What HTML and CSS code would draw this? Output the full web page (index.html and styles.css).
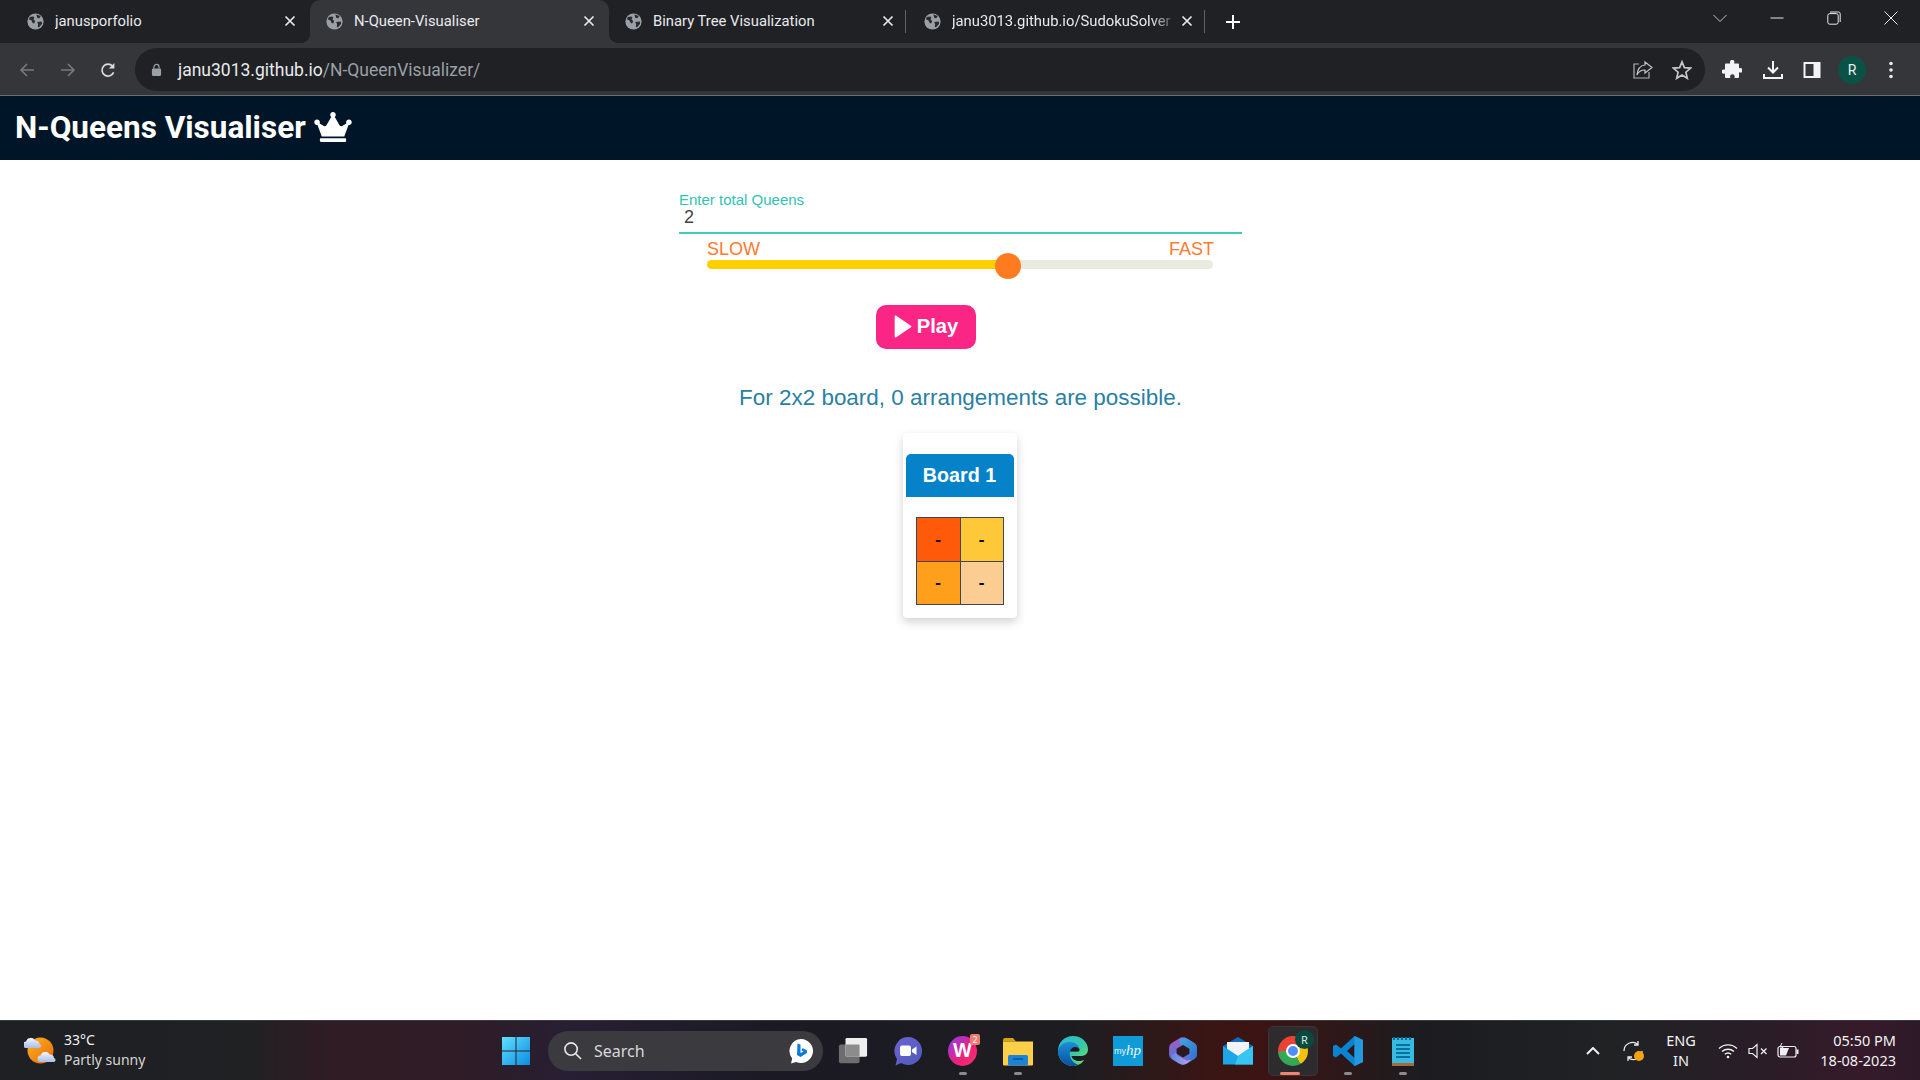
FILE: index.html
```html
<!DOCTYPE html>
<html lang="en">
<head>
<meta charset="utf-8">
<title>N-Queens Visualiser</title>
<link rel="stylesheet" href="styles.css">
</head>
<body>
<svg class="defs" width="0" height="0" aria-hidden="true">
  <symbol id="globe" viewBox="0 0 18 18">
    <circle cx="9" cy="9" r="8.600" fill="#9aa0a6"/>
    <path d="M3 4.200 6.600 3.600 8 5 6.800 6.600 8.600 8.600 7.600 11 6 10.600 4.800 8 2 6.600Z" fill="#2a2b2f"/>
    <path d="M10 1.500 14.600 3.200 13 5.600 11 5.200 10.400 3.400ZM10.800 9.400 15.600 9 16 11.400 12.600 15.400 11.400 14.400 11.800 11.800Z" fill="#2a2b2f"/>
  </symbol>
  <symbol id="close" viewBox="0 0 12 12">
    <path d="M1.500 1.500 10.500 10.500M10.500 1.500 1.500 10.500" fill="none" stroke="#e8eaed" stroke-width="1.700"/>
  </symbol>
</svg>

<div class="page">
  <div class="browser">
    <div class="tabstrip">
      <div class="tab"><svg class="favicon"><use href="#globe"/></svg><span class="tab-title">janusporfolio</span><svg class="tab-close"><use href="#close"/></svg></div>
      <div class="tab active"><svg class="favicon"><use href="#globe"/></svg><span class="tab-title">N-Queen-Visualiser</span><svg class="tab-close"><use href="#close"/></svg></div>
      <div class="tab"><svg class="favicon"><use href="#globe"/></svg><span class="tab-title">Binary Tree Visualization</span><svg class="tab-close"><use href="#close"/></svg></div>
      <div class="tab sep"><svg class="favicon"><use href="#globe"/></svg><span class="tab-title fade">janu3013.github.io/SudokuSolver</span><svg class="tab-close"><use href="#close"/></svg></div>
      <svg class="newtab" viewBox="0 0 16 16"><path d="M8 1V15M1 8H15" stroke="#fff" stroke-width="2"/></svg>
      <div class="winctl">
        <svg class="winbtn" viewBox="0 0 14 14"><path d="M0.500 4 7 10.500 13.500 4" fill="none" stroke="#c4c6c9" stroke-width="1"/></svg>
        <svg class="winbtn" viewBox="0 0 14 14"><path d="M0.500 7H13.500" stroke="#e8eaed" stroke-width="1"/></svg>
        <svg class="winbtn" viewBox="0 0 14 14"><rect x="0.800" y="2.600" width="10.400" height="10.600" rx="2" fill="none" stroke="#e8eaed"/><path d="M3 1H11.400Q13.200 1 13.200 2.800V11" fill="none" stroke="#e8eaed"/></svg>
        <svg class="winbtn" viewBox="0 0 14 14"><path d="M0.500 0.500 13.500 13.500M13.500 0.500 0.500 13.500" stroke="#e8eaed" stroke-width="1"/></svg>
      </div>
    </div>
    <div class="toolbar">
      <svg class="nav" viewBox="0 0 16 16"><path d="M15 8H2M8 2 2 8 8 14" fill="none" stroke="#777a7e" stroke-width="1.600"/></svg>
      <svg class="nav" viewBox="0 0 16 16"><path d="M1 8H14M8 2 14 8 8 14" fill="none" stroke="#777a7e" stroke-width="1.600"/></svg>
      <svg class="nav" viewBox="0 0 16 16"><path d="M13.600 10.400A6 6 0 1 1 12.600 4.200" fill="none" stroke="#dadce0" stroke-width="1.700"/><path d="M14.400 1V6.600H8.800Z" fill="#dadce0"/></svg>
      <div class="omnibox">
        <svg class="lock" viewBox="0 0 12 14"><rect x="1" y="6" width="10" height="8" rx="1.200" fill="#9aa0a6"/><path d="M3.200 6V4.200a2.800 2.800 0 0 1 5.600 0V6" fill="none" stroke="#9aa0a6" stroke-width="1.300"/></svg>
        <span class="url"><span class="url-host">janu3013.github.io</span>/N-QueenVisualizer/</span>
        <svg class="omni-icon share" viewBox="0 0 20 18"><path d="M6 3H1V17H16V11" fill="none" stroke="#aeb1b5" stroke-width="1.200"/><path d="M12 1 19 6.500 12 12V9C8 9 5.500 10.500 4 14 4.500 8.500 7.500 4.500 12 4Z" fill="none" stroke="#c4c6c9" stroke-width="1.200"/></svg>
        <svg class="omni-icon star" viewBox="0 0 20 20"><path d="M10 1.800 12.400 7.600 18.600 8.100 13.900 12.200 15.300 18.300 10 15 4.700 18.300 6.100 12.200 1.400 8.100 7.600 7.600Z" fill="none" stroke="#c4c6c9" stroke-width="1.700"/></svg>
      </div>
      <svg class="tool puzzle" viewBox="0 0 20 20"><path d="M8 2a2.200 2.200 0 0 1 4.400 0c0 .6-.2 1-.3 1.500H16a1 1 0 0 1 1 1v3.800c.5-.1 1-.3 1.400-.3a2.300 2.300 0 0 1 0 4.600c-.4 0-.9-.2-1.400-.3V17a1 1 0 0 1-1 1h-3.600c.1-.5.300-1 .3-1.400a2.300 2.300 0 0 0-4.600 0c0 .4.200.9.300 1.400H4a1 1 0 0 1-1-1v-3.400c-.4.100-.8.200-1.200.2a2.200 2.200 0 0 1 0-4.400c.4 0 .8.100 1.200.2V4.500a1 1 0 0 1 1-1h4.200C8.100 3 8 2.600 8 2Z" fill="#f1f3f4"/></svg>
      <svg class="tool" viewBox="0 0 20 20"><path d="M10 1V12M5 7.500 10 12.500 15 7.500" fill="none" stroke="#f1f3f4" stroke-width="2"/><path d="M1 14V18H19V14" fill="none" stroke="#f1f3f4" stroke-width="2"/></svg>
      <svg class="tool panel" viewBox="0 0 20 20"><rect x="1.500" y="2" width="17" height="16" fill="#f1f3f4"/><rect x="3.500" y="4" width="8" height="12" fill="#35363a"/></svg>
      <div class="avatar">R</div>
      <svg class="tool kebab" viewBox="0 0 4 18"><circle cx="2" cy="2.500" r="1.800" fill="#e8eaed"/><circle cx="2" cy="9" r="1.800" fill="#e8eaed"/><circle cx="2" cy="15.500" r="1.800" fill="#e8eaed"/></svg>
    </div>
  </div>

  <header class="appbar">
    <h1 class="app-title">N-Queens Visualiser</h1>
    <svg class="crown" viewBox="0 0 640 512"><path d="M528 448H112c-8.800 0-16 7.200-16 16v32c0 8.800 7.200 16 16 16h416c8.800 0 16-7.200 16-16v-32c0-8.800-7.200-16-16-16zm64-320c-26.500 0-48 21.500-48 48 0 7.100 1.600 13.700 4.400 19.800L476 239.200c-15.400 9.200-35.300 4-44.200-11.600L350.300 85C361 76.200 368 63 368 48c0-26.500-21.500-48-48-48s-48 21.500-48 48c0 15 7 28.200 17.700 37l-81.500 142.600c-8.900 15.600-28.900 20.800-44.200 11.600l-72.300-43.400c2.700-6 4.400-12.700 4.400-19.800 0-26.500-21.500-48-48-48S0 149.500 0 176s21.500 48 48 48c2.600 0 5.200-.4 7.700-.8L128 416h384l72.300-192.800c2.500.4 5.100.8 7.700.8 26.500 0 48-21.500 48-48s-21.500-48-48-48z" fill="#fff"/></svg>
  </header>

  <main class="content">
    <div class="controls">
      <label class="field-label">Enter total Queens</label>
      <div class="field-value">2</div>
      <div class="speed">
        <div class="speed-labels"><span>SLOW</span><span>FAST</span></div>
        <div class="track"><div class="track-fill"></div><div class="thumb"></div></div>
      </div>
      <button class="play"><svg class="play-icon" viewBox="0 0 18 22"><path d="M2.500 1.500 16.500 11 2.500 20.500Z" fill="#fff" stroke="#fff" stroke-width="2" stroke-linejoin="round"/></svg>Play</button>
      <p class="result">For 2x2 board, 0 arrangements are possible.</p>
      <section class="board-card">
        <h2 class="board-title">Board 1</h2>
        <div class="board">
          <div class="cell c1">-</div>
          <div class="cell c2">-</div>
          <div class="cell c3">-</div>
          <div class="cell c4">-</div>
        </div>
      </section>
    </div>
  </main>

  <footer class="taskbar">
    <div class="tb-left">
      <svg class="weather" viewBox="0 0 32 32">
        <defs><linearGradient id="sun" x1="0" y1="0" x2="1" y2="1"><stop offset="0" stop-color="#fbb51c"/><stop offset="1" stop-color="#e8690f"/></linearGradient>
        <linearGradient id="cloud" x1="0" y1="0" x2="0" y2="1"><stop offset="0" stop-color="#f4f7fd"/><stop offset="1" stop-color="#a9bde8"/></linearGradient></defs>
        <circle cx="16.500" cy="15.500" r="13" fill="url(#sun)"/>
        <path d="M3.500 14a3.300 3.300 0 0 1 .5-6.500 5 5 0 0 1 9.200-1 3.700 3.700 0 0 1 4.300 3.600 2 2 0 0 1 0 3.900Z" fill="url(#cloud)" transform="translate(-2 -1)"/>
        <path d="M15 27a3.300 3.300 0 0 1 .5-6.500 5 5 0 0 1 9.200-1 3.700 3.700 0 0 1 4.300 3.600 2 2 0 0 1 0 3.900Z" fill="url(#cloud)" transform="translate(1 -0)"/>
      </svg>
      <div class="weather-text"><span class="temp">33°C</span><span class="cond">Partly sunny</span></div>
    </div>
    <div class="tb-center">
      <div class="tb-item">
        <svg class="ic30" viewBox="0 0 30 30"><defs><linearGradient id="win" x1="0" y1="0" x2="1" y2="1"><stop offset="0" stop-color="#5fe0ff"/><stop offset="1" stop-color="#0a8de0"/></linearGradient></defs><path d="M1 1H14.500V14.500H1ZM15.500 1H29V14.500H15.500ZM1 15.500H14.500V29H1ZM15.500 15.500H29V29H15.500Z" fill="url(#win)"/></svg>
      </div>
      <div class="searchbox">
        <svg class="search-icon" viewBox="0 0 20 20"><circle cx="8.500" cy="8.500" r="6.500" fill="none" stroke="#e6e6e6" stroke-width="1.700"/><path d="M13.500 13.500 19 19" stroke="#e6e6e6" stroke-width="1.700"/></svg>
        <span class="search-text">Search</span>
        <svg class="bing" viewBox="0 0 26 26"><path d="M13 1a12 12 0 1 1-5 22.900L3 25.500l1.200-5A12 12 0 0 1 13 1Z" fill="#fff"/><path d="M9.500 5.500 12.500 6.500V15l3-1.500-2-1 1-2.500 4.500 2.500V15l-6.500 4-3.500-2Z" fill="#0c7bdc"/></svg>
      </div>
      <div class="tb-item">
        <svg class="ic30" viewBox="0 0 32 32"><rect x="1" y="9" width="22" height="20" rx="2" fill="#6d6d6f"/><rect x="8" y="2" width="23" height="20" rx="1.500" fill="#eeeeee"/><rect x="8" y="9" width="15" height="13" rx="1" fill="#8c8c8d"/></svg>
      </div>
      <div class="tb-item">
        <svg class="ic30" viewBox="0 0 30 30"><defs><linearGradient id="meet" x1="0" y1="0" x2="1" y2="1"><stop offset="0" stop-color="#6d62d4"/><stop offset="1" stop-color="#4d5bb8"/></linearGradient></defs><path d="M15 1a14 14 0 1 1-7 26.100L2.500 29.500 4 23A14 14 0 0 1 15 1Z" fill="url(#meet)"/><rect x="7" y="9.500" width="11" height="10.500" rx="2" fill="#fff"/><path d="M19 13.500 23.500 10.500V19L19 16Z" fill="#fff"/></svg>
      </div>
      <div class="tb-item dot">
        <div class="wps"><span class="wps-w">W</span><span class="wps-badge">2</span></div>
      </div>
      <div class="tb-item dot">
        <svg class="ic30" viewBox="0 0 30 30"><path d="M0 4Q0 2 2 2H10L13 5.500H0Z" fill="#d9a20f"/><path d="M0 5.500H30V28.500Q30 29.500 29 29.500H1Q0 29.500 0 28.500Z" fill="#ffcf48"/><rect x="5" y="19" width="20" height="10.500" rx="1.500" fill="#1c84d6"/><rect x="10" y="22" width="10" height="2" fill="#0e5ea8"/></svg>
      </div>
      <div class="tb-item">
        <svg class="ic30" viewBox="0 0 30 30"><defs><linearGradient id="edge1" x1="0" y1="0" x2="1" y2="1"><stop offset="0" stop-color="#2fb8d8"/><stop offset="0.550" stop-color="#35c8a8"/><stop offset="1" stop-color="#7fe05a"/></linearGradient><linearGradient id="edge2" x1="0" y1="0" x2="0" y2="1"><stop offset="0" stop-color="#1a8fd8"/><stop offset="1" stop-color="#0b4fa0"/></linearGradient></defs><path d="M15 0C23.500 0 30 6 30 13.500 30 18 26.500 20 23 20H13.500C14 23 17.500 25 21 25 23.500 25 25.500 24.300 26.500 23.700 24 27.500 19.500 30 15 30 6.500 30 0 23.500 0 15 0 6.500 6.500 0 15 0Z" fill="url(#edge1)"/><path d="M0 15C1 9 6.500 6 11.500 6 17 6 21.500 9.500 21.500 13 21.500 15 20 15.500 19 15.500H12C11 20 13 26 20 28.700 18.500 29.500 16.500 30 15 30 6.500 30 0 23.500 0 15Z" fill="url(#edge2)"/><path d="M12 15.500C12.500 12.500 15 11 17 11 19.500 11 21.500 12.500 21.500 14 21.500 15 20.500 15.500 19.500 15.500Z" fill="#271718"/></svg>
      </div>
      <div class="tb-item">
        <div class="myhp"><span>my</span><i>hp</i></div>
      </div>
      <div class="tb-item">
        <svg class="ic30" viewBox="0 0 28 28"><defs><linearGradient id="m1" x1="0" y1="0" x2="0" y2="1"><stop offset="0" stop-color="#a45ac8"/><stop offset="1" stop-color="#4a78d8"/></linearGradient><linearGradient id="m2" x1="0" y1="0" x2="1" y2="1"><stop offset="0" stop-color="#3fa8e0"/><stop offset="1" stop-color="#2e6cd0"/></linearGradient><linearGradient id="m3" x1="0" y1="0" x2="1" y2="0"><stop offset="0" stop-color="#5a8ae0"/><stop offset="1" stop-color="#c9a0ea"/></linearGradient></defs><path d="M10 2.500Q14 0 18 2.500L24.500 6.500Q27 8 27 11V17Q27 20 24.500 21.500L18 25.500Q14 28 10 25.500L3.500 21.500Q1 20 1 17V11Q1 8 3.500 6.500Z" fill="url(#m1)"/><path d="M11 3Q14 1 18 2.500L24.500 6.500Q27 8 27 11V17Q27 20 24.500 21.500L20 24V12L11 7Z" fill="url(#m2)"/><path d="M3 18 9 15V18.500L18 23 22 22 18 25.500Q14 28 10 25.500L3.500 21.500Z" fill="url(#m3)"/><path d="M14 8.500 20 12V16.500L14 20 8 16.500V12Z" fill="#2a1a20"/></svg>
      </div>
      <div class="tb-item">
        <svg class="ic30" viewBox="0 0 30 30"><path d="M0 10 15 1 30 10V28H0Z" fill="#0f6cc2"/><path d="M4 6H26V16L15 22 4 16Z" fill="#f2f4f7"/><path d="M0 10 15 20 30 10V28.500H0Z" fill="#1ba7e8"/><path d="M15 20 30 10V28.500H12Z" fill="#37c6f4"/></svg>
      </div>
      <div class="tb-item chrome-item">
        <div class="chrome"><div class="chrome-core"></div></div>
        <span class="chrome-badge">R</span>
      </div>
      <div class="tb-item dot">
        <svg class="ic30" viewBox="0 0 30 30"><path d="M21.500 0 30 4V26L21.500 30 8 17.500 3 21.500 0 20V10L3 8.500 8 12.500ZM21.500 8 14 15 21.500 22Z" fill="#0a84d0"/><path d="M21.500 0 30 4V26L21.500 30Z" fill="#2399e0"/></svg>
      </div>
      <div class="tb-item dot">
        <svg class="ic30" viewBox="0 0 24 30"><rect x="1" y="2" width="22" height="27" fill="#35bce0"/><rect x="1" y="27" width="22" height="3" fill="#a9673a"/><path d="M5 9H19M5 13H19M5 17H19M5 21H19" stroke="#0a6fa0" stroke-width="2"/><path d="M3 1V4M7 1V4M11 1V4M15 1V4M19 1V4" stroke="#0a6fa0" stroke-width="2"/></svg>
      </div>
    </div>
    <div class="tray">
      <svg class="chevron" viewBox="0 0 14 8"><path d="M1 7 7 1 13 7" fill="none" stroke="#f0f0f0" stroke-width="2"/></svg>
      <div class="sync">
        <svg class="sync-icon" viewBox="0 0 22 22"><path d="M2 11A8.500 8.500 0 0 1 16 4.500M16 1V5H12M20 11A8.500 8.500 0 0 1 6 17.500M6 21V17H10" fill="none" stroke="#ececec" stroke-width="1.300"/></svg>
        <span class="sync-dot"></span>
      </div>
      <div class="lang"><span>ENG</span><span>IN</span></div>
      <svg class="tray-icon wifi" viewBox="0 0 20 16"><path d="M1 5.500A13 13 0 0 1 19 5.500M4 8.500A9 9 0 0 1 16 8.500M6.800 11.300A5 5 0 0 1 13.200 11.300" fill="none" stroke="#f0f0f0" stroke-width="1.400"/><circle cx="10" cy="14" r="1.300" fill="#f0f0f0"/></svg>
      <svg class="tray-icon vol" viewBox="0 0 20 16"><path d="M1 5.500H4.500L9 1.500V14.500L4.500 10.500H1Z" fill="none" stroke="#f0f0f0" stroke-width="1.200"/><path d="M13 5.500 18.500 11M18.500 5.500 13 11" stroke="#f0f0f0" stroke-width="1.300"/></svg>
      <svg class="tray-icon batt" viewBox="0 0 22 16"><rect x="1" y="3.500" width="18" height="10.500" rx="2" fill="none" stroke="#f0f0f0" stroke-width="1.200"/><rect x="19.500" y="6.500" width="2" height="4.500" fill="#f0f0f0"/><path d="M3 5H12L9 12.500H3Z" fill="#f0f0f0"/><path d="M5 0 3 4H6L4 8" fill="none" stroke="#f0f0f0" stroke-width="1"/></svg>
      <div class="clock"><span>05:50 PM</span><span>18-08-2023</span></div>
    </div>
  </footer>
</div>
</body>
</html>
```

FILE: styles.css
```css
* { box-sizing: border-box; }
html, body { margin: 0; height: 100%; }
body { font-family: "Liberation Sans", Arial, sans-serif; background: #fff; overflow: hidden; }
.defs { position: absolute; }
svg { display: block; flex: none; }
.page { display: flex; flex-direction: column; height: 100vh; }

/* browser frame */
.browser { display: flex; flex-direction: column; font-family: Roboto, sans-serif; }
.tabstrip { display: flex; align-items: stretch; height: 43px; background: #202124; padding-left: 11px; }
.tab { position: relative; display: flex; align-items: center; width: 299px; padding: 0 0 1px 16px; color: #e8eaed; font-size: 14.800px; }
.tab.active { background: #35363a; border-radius: 10px 10px 0 0; }
.tab.active::before, .tab.active::after { content: ""; position: absolute; bottom: 0; width: 10px; height: 10px; }
.tab.active::before { left: -10px; background: radial-gradient(circle at 0 0, #202124 10px, #35363a 10.500px); }
.tab.active::after { right: -10px; background: radial-gradient(circle at 100% 0, #202124 10px, #35363a 10.500px); }
.tab.sep::after { content: ""; position: absolute; right: 2px; top: 10px; bottom: 10px; width: 1px; background: #5f6368; }
.tab:nth-child(3)::after { content: ""; position: absolute; right: 2px; top: 10px; bottom: 10px; width: 1px; background: #5f6368; }
.favicon { width: 17px; height: 17px; }
.tab-title { margin-left: 11px; width: 226px; padding-bottom: 1px; white-space: nowrap; overflow: hidden; }
.tab-title.fade { -webkit-mask-image: linear-gradient(90deg, #000 88%, transparent 100%); mask-image: linear-gradient(90deg, #000 88%, transparent 100%); }
.tab-close { width: 12px; height: 12px; margin-left: 3px; }
.newtab { width: 16px; height: 16px; align-self: center; margin-left: 18px; }
.winctl { display: flex; align-items: center; margin-left: auto; padding-right: 22px; gap: 43px; height: 36px; }
.winbtn { width: 14px; height: 14px; }

.toolbar { display: flex; align-items: center; height: 53px; background: #35363a; border-bottom: 1px solid #6b6d70; padding: 1px 20px 0 19px; }
.nav { width: 16px; height: 16px; margin-right: 24.500px; }
.omnibox { display: flex; align-items: center; flex: none; width: 1570px; height: 43px; margin-left: -5.500px; border-radius: 22px; background: #202124; padding: 0 13px 0 16px; }
.lock { width: 11px; height: 13px; }
.url { margin-left: 16px; font-size: 17.500px; color: #9aa0a6; white-space: nowrap; }
.url-host { color: #e8eaed; }
.omni-icon { width: 20px; height: 20px; }
.share { margin-left: auto; margin-right: 19px; }
.tool { width: 20px; height: 20px; margin-left: 21px; }
.puzzle { margin-left: 17px; }
.panel { margin-left: 19px; }
.avatar { flex: none; width: 28px; height: 28px; margin-left: 16px; border-radius: 50%; background: #0a5245; color: #e8f0ee; font-size: 14px; display: flex; align-items: center; justify-content: center; }
.kebab { width: 4px; height: 18px; margin-left: 23px; }

/* app */
.appbar { display: flex; align-items: center; height: 64px; background: #001628; padding: 0 0 2px 15px; }
.app-title { margin: 0; font-family: Roboto, sans-serif; font-size: 31.500px; font-weight: 700; color: #fff; }
.crown { width: 38px; height: 30px; margin-left: 8px; }

.content { flex: 1; min-height: 0; display: flex; justify-content: center; }
.controls { width: 563px; margin-left: 1px; padding-top: 31px; display: flex; flex-direction: column; }
.field-label { font-size: 15px; line-height: 17px; color: #2fc4b4; }
.field-value { height: 26px; padding-left: 5px; border-bottom: 2px solid #3ecabc; color: #444; font-size: 18px; line-height: 19px; }
.speed { margin: 5px 29px 0 28px; }
.speed-labels { display: flex; justify-content: space-between; margin-right: -1px; font-size: 18px; line-height: 20px; color: #ff7a2f; }
.track { position: relative; height: 9px; margin-top: 1px; border-radius: 5px; background: #e9ebdf; }
.track-fill { width: 60%; height: 100%; border-radius: 5px; background: #ffd000; }
.thumb { position: absolute; left: 288px; top: -7px; width: 26px; height: 26px; border-radius: 50%; background: #ff7b1f; }
.play { display: flex; align-items: center; justify-content: center; align-self: flex-start; width: 100px; height: 44px; margin: 36px 0 0 197px; border: 0; border-radius: 10px; background: #fb2586; color: #fff; font: 700 20.200px "Liberation Sans", Arial, sans-serif; padding: 0 1px 2px 0; }
.play-icon { width: 19px; height: 23px; margin-right: 5px; }
.result { margin: 34px 0 0; text-align: center; font-size: 22.450px; line-height: 29px; color: #2a7fa5; }
.board-card { align-self: center; width: 114px; height: 185px; margin: 21px 2px 0 0; padding: 21px 3px 0; border-radius: 4px; background: #fff; box-shadow: 0 4px 10px rgba(0,0,0,.18); }
.board-title { margin: 0; height: 43px; border-radius: 5px 5px 0 0; background: #0682c9; color: #fff; font-size: 19.700px; font-weight: 700; line-height: 42px; text-align: center; }
.board { display: grid; grid-template-columns: 43px 42px; grid-template-rows: 43px 42px; width: 88px; margin: 20px 0 0 10px; background: #3f4656; gap: 1px; border: 1px solid #3f4656; }
.cell { display: flex; align-items: center; justify-content: center; font-size: 17px; font-weight: 700; color: #000; }
.c1 { background: #ff5a0a; }
.c2 { background: #ffc838; }
.c3 { background: #ff9f1c; }
.c4 { background: #fbcd92; }

/* taskbar */
.taskbar { display: flex; align-items: center; height: 60px; border-top: 1px solid #3a3a3c; background: linear-gradient(90deg, #1f2023 0, #202123 13%, #2f1c24 17%, #2f1c26 24%, #261f33 30%, #1b1a24 40%, #1d1d20 56%, #3a1514 63%, #3b1413 66%, #1c1c20 74%, #202224 84%, #2a1d28 92%, #361a2a 97%, #2c1a28 100%); font-family: "Noto Sans", sans-serif; color: #f2f2f2; }
.tb-left { display: flex; align-items: center; width: 488px; padding-left: 24px; }
.weather { width: 32px; height: 32px; }
.weather-text { display: flex; flex-direction: column; margin: 0 0 2px 8px; font-size: 14px; line-height: 20px; }
.cond { color: #d5d5d5; }
.tb-center { display: flex; align-items: center; }
.tb-item { position: relative; display: flex; align-items: center; justify-content: center; width: 55px; height: 50px; }
.tb-item.dot::after { content: ""; position: absolute; left: 24px; bottom: 1px; width: 8px; height: 3px; border-radius: 2px; background: #8b8b8d; }
.ic30 { width: 30px; height: 30px; }
.searchbox { display: flex; align-items: center; width: 275px; height: 40px; margin: 0 2px 0 5px; padding: 0 9px 0 15px; border-radius: 20px; background: #3a3a3f; }
.search-icon { width: 19px; height: 19px; }
.search-text { margin-left: 12px; font-size: 16px; color: #d8d8d8; }
.bing { width: 26px; height: 26px; margin-left: auto; }
.wps { position: relative; width: 29px; height: 30px; border-radius: 50%; background: linear-gradient(135deg, #8a3cf0, #f0207a 60%, #f8356b); display: flex; align-items: center; justify-content: center; }
.wps-w { font: 700 20px "Liberation Sans", sans-serif; color: #fff; }
.wps-badge { position: absolute; top: -2px; right: -3px; width: 10px; height: 11px; background: #f07a70; border-radius: 2px; font-size: 9px; line-height: 11px; text-align: center; color: #fff; }
.myhp { display: flex; align-items: center; justify-content: center; width: 30px; height: 30px; background: #0f9ad8; color: #e8f6fc; font: 9px "Liberation Sans", sans-serif; }
.myhp i { font-size: 15px; font-family: "Liberation Serif", serif; }
.chrome-item::before { content: ""; position: absolute; left: 3px; right: 2px; top: 0; bottom: 0; border-radius: 5px; background: #2d2b2d; border: 1px solid #383638; }
.chrome-item::after { content: ""; position: absolute; left: 15px; bottom: 1px; width: 20px; height: 3px; border-radius: 2px; background: #f4846f; }
.chrome { position: relative; width: 30px; height: 30px; border-radius: 50%; background: conic-gradient(from 30deg, #f4c20d 0 33%, #34a853 33% 66%, #ea4335 66% 100%); display: flex; align-items: center; justify-content: center; }
.chrome-core { width: 14px; height: 14px; border-radius: 50%; background: #4f8ef7; border: 2px solid #fff; }
.chrome-badge { position: absolute; top: 4px; right: 6px; width: 19px; height: 19px; border-radius: 50%; background: #0a4a3e; color: #d8e8e4; font-size: 11px; line-height: 19px; text-align: center; }

.tray { display: flex; align-items: center; margin-left: 156px; }
.chevron { width: 14px; height: 8px; }
.sync { position: relative; width: 22px; height: 22px; margin-left: 22px; }
.sync-icon { width: 22px; height: 22px; }
.sync-dot { position: absolute; right: 0; bottom: 1px; width: 10px; height: 10px; border-radius: 50%; background: #f7a30d; }
.lang { display: flex; flex-direction: column; align-items: center; width: 40px; margin: 0 0 2px 17px; font-size: 14.500px; line-height: 20px; }
.tray-icon { width: 20px; height: 16px; }
.wifi { margin-left: 17px; }
.vol { margin-left: 10px; }
.batt { width: 22px; margin-left: 9px; }
.clock { display: flex; flex-direction: column; align-items: flex-end; width: 90px; margin: 0 0 2px 7px; font-size: 14.500px; line-height: 20px; }
```
